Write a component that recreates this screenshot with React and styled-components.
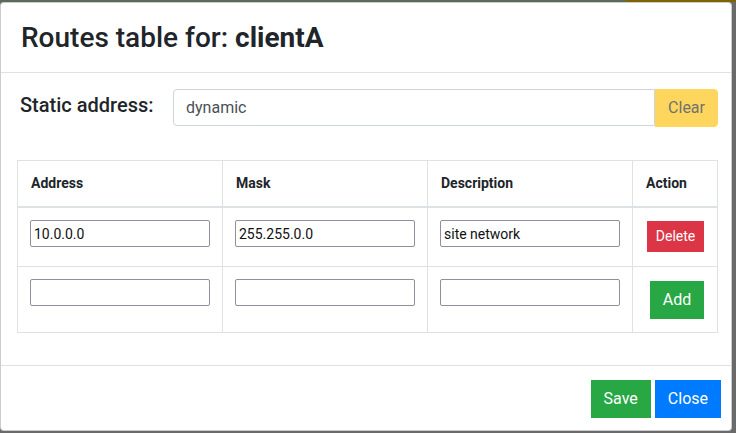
import React from "react";
import styled, { createGlobalStyle } from "styled-components";

const Global = createGlobalStyle`
  html, body { margin: 0; padding: 0; }
  body {
    font-family: Roboto, "Liberation Sans", sans-serif;
    color: #212529;
    background:
      linear-gradient(to right, #5b6b5a 0 626px, #7d6400 626px) top left / 100% 2px no-repeat,
      #6a6a6a;
    width: 736px;
    height: 433px;
    overflow: hidden;
  }
  * { box-sizing: border-box; }
`;

const Modal = styled.div`
  margin: 2px 0 0 0;
  width: 732px;
  height: 429px;
  background: #fff;
  border: 1px solid rgba(0, 0, 0, 0.2);
  border-radius: 4px;
  display: flex;
  flex-direction: column;
`;

const Header = styled.div`
  padding: 14px 20px 13px;
  border-bottom: 1px solid #dee2e6;
`;

const Title = styled.h3`
  margin: 0;
  font-size: 28px;
  font-weight: 500;
  line-height: 42px;

  b {
    font-weight: 700;
  }
`;

const Body = styled.div`
  padding: 16px 13px 0 16px;
  flex: 1;
`;

const StaticRow = styled.div`
  display: flex;
  align-items: flex-start;
`;

const Label = styled.label`
  width: 156px;
  padding: 1px 0 0 3px;
  font-size: 20px;
  font-weight: 500;
  line-height: 30px;
`;

const InputGroup = styled.div`
  flex: 1;
  display: flex;
`;

const FormControl = styled.input`
  flex: 1;
  height: 37px;
  padding: 6px 12px;
  font-family: Roboto, sans-serif;
  font-size: 16px;
  color: #495057;
  border: 1px solid #ced4da;
  border-radius: 4px 0 0 4px;
  outline: none;
`;

const Btn = styled.button`
  font-family: Roboto, sans-serif;
  font-size: ${(p) => (p.$small ? "14px" : "16px")};
  line-height: ${(p) => (p.$small ? "21px" : "24px")};
  padding: ${(p) => (p.$small ? "4px 8px" : "6px 12px")};
  border: 1px solid ${(p) => p.$bg};
  background: ${(p) => p.$bg};
  color: ${(p) => p.$fg || "#fff"};
  border-radius: ${(p) => p.$radius || "0"};
  opacity: ${(p) => (p.$disabled ? 0.65 : 1)};
  cursor: pointer;
`;

const Table = styled.table`
  margin-top: 33px;
  width: 701px;
  border-collapse: collapse;
  font-size: 14px;
`;

const Th = styled.th`
  border: 1px solid #dee2e6;
  border-bottom: 2px solid #dee2e6;
  padding: 12px 13px;
  text-align: left;
  font-weight: 700;
  line-height: 21px;
  width: ${(p) => p.$w};
`;

const Td = styled.td`
  border: 1px solid #dee2e6;
  padding: ${(p) => p.$pad || "12px 12px 19px"};
  vertical-align: top;
  text-align: ${(p) => (p.$pad ? "center" : "left")};
`;

const CellInput = styled.input`
  display: block;
  width: 180px;
  height: 27px;
  padding: 2px 3px;
  font-family: Roboto, sans-serif;
  font-size: 14px;
  color: #111;
  border: 1px solid #8f8f9d;
  border-radius: 2px;
  outline: none;
`;

const Footer = styled.div`
  border-top: 1px solid #dee2e6;
  display: flex;
  justify-content: flex-end;
  gap: 4px;
  padding: 14px 10px 12px;
`;

const routes = [
  { address: "10.0.0.0", mask: "255.255.0.0", description: "site network" },
];

export default function App() {
  return (
    <>
      <Global />
      <Modal>
        <Header>
          <Title>
            Routes table for: <b>clientA</b>
          </Title>
        </Header>
        <Body>
          <StaticRow>
            <Label>Static address:</Label>
            <InputGroup>
              <FormControl defaultValue="dynamic" />
              <Btn $bg="#ffc107" $fg="#212529" $radius="0 4px 4px 0" $disabled>
                Clear
              </Btn>
            </InputGroup>
          </StaticRow>
          <Table>
            <thead>
              <tr>
                <Th $w="205px">Address</Th>
                <Th $w="205px">Mask</Th>
                <Th $w="205px">Description</Th>
                <Th>Action</Th>
              </tr>
            </thead>
            <tbody>
              {routes.map((r, i) => (
                <tr key={i}>
                  <Td>
                    <CellInput defaultValue={r.address} />
                  </Td>
                  <Td>
                    <CellInput defaultValue={r.mask} />
                  </Td>
                  <Td>
                    <CellInput defaultValue={r.description} />
                  </Td>
                  <Td $pad="13px 12px 12px 13px">
                    <Btn $small $bg="#dc3545">Delete</Btn>
                  </Td>
                </tr>
              ))}
              <tr>
                <Td>
                  <CellInput />
                </Td>
                <Td>
                  <CellInput />
                </Td>
                <Td>
                  <CellInput />
                </Td>
                <Td $pad="14px 12px 13px 16px">
                  <Btn $bg="#28a745">Add</Btn>
                </Td>
              </tr>
            </tbody>
          </Table>
        </Body>
        <Footer>
          <Btn $bg="#28a745">Save</Btn>
          <Btn $bg="#007bff">Close</Btn>
        </Footer>
      </Modal>
    </>
  );
}
